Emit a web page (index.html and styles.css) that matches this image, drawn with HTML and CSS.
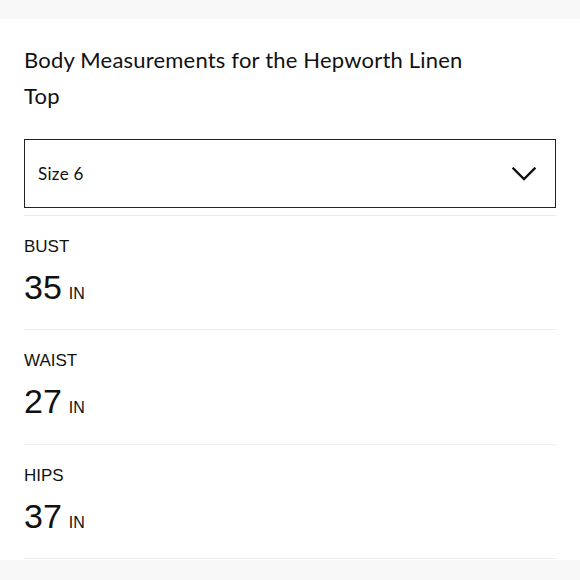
FILE: index.html
```html
<!DOCTYPE html>
<html lang="en">
<head>
<meta charset="utf-8">
<title>Body Measurements</title>
<link rel="stylesheet" href="styles.css">
</head>
<body>
<div class="topbar"></div>
<main class="content">
  <h1 class="title">Body Measurements for the Hepworth Linen Top</h1>
  <div class="select">
    <span class="select-value">Size 6</span>
    <svg class="chevron" width="24" height="14" viewBox="0 0 24 14" aria-hidden="true">
      <path d="M1.5 1.5 L12 12 L22.5 1.5" fill="none" stroke="#111" stroke-width="2.3" stroke-linecap="square" stroke-linejoin="miter"/>
    </svg>
  </div>
  <div class="gap"></div>
  <section class="measure">
    <div class="measure-label">BUST</div>
    <div class="measure-value"><span class="num">35</span><span class="unit">IN</span></div>
  </section>
  <section class="measure">
    <div class="measure-label">WAIST</div>
    <div class="measure-value"><span class="num">27</span><span class="unit">IN</span></div>
  </section>
  <section class="measure">
    <div class="measure-label">HIPS</div>
    <div class="measure-value"><span class="num">37</span><span class="unit">IN</span></div>
  </section>
  <div class="end-rule"></div>
</main>
<div class="bottombar"></div>
</body>
</html>
```
FILE: styles.css
```css
html, body {
  margin: 0;
  padding: 0;
  background: #ffffff;
  color: #111111;
}
body {
  height: 580px;
  overflow: hidden;
  display: flex;
  flex-direction: column;
}
.topbar {
  height: 19px;
  background: #f8f8f8;
  flex: none;
}
.content {
  padding: 0 24px;
  flex: none;
}
.title {
  margin: 23px 0 0;
  max-width: 452px;
  font-family: "Lato", "Noto Sans", sans-serif;
  font-weight: 400;
  font-size: 22px;
  letter-spacing: 0.2px;
  line-height: 36px;
  color: #111;
}
.select {
  margin-top: 24.5px;
  height: 67.5px;
  border: 1.5px solid #222;
  display: flex;
  align-items: center;
  justify-content: space-between;
  padding: 0 19px 0 13px;
}
.select-value {
  font-family: "Lato", "Noto Sans", sans-serif;
  font-size: 17px;
  letter-spacing: 0.3px;
  color: #111;
}
.chevron {
  display: block;
  margin-top: 2px;
}
.gap {
  height: 6.5px;
}
.measure {
  border-top: 1px solid #ededed;
  padding: 21px 0 22.5px;
  font-family: "Liberation Sans", Arial, sans-serif;
  color: #111;
}
.measure-label {
  font-size: 17px;
  line-height: 20px;
  margin-bottom: 10px;
}
.measure-value {
  height: 40px;
  line-height: 40px;
  white-space: nowrap;
}
.num {
  font-size: 34px;
}
.unit {
  font-size: 16px;
  margin-left: 7px;
}
.end-rule {
  border-top: 1px solid #ededed;
}
.bottombar {
  margin-top: 1px;
  flex: 1;
  background: #f8f8f8;
}
```
